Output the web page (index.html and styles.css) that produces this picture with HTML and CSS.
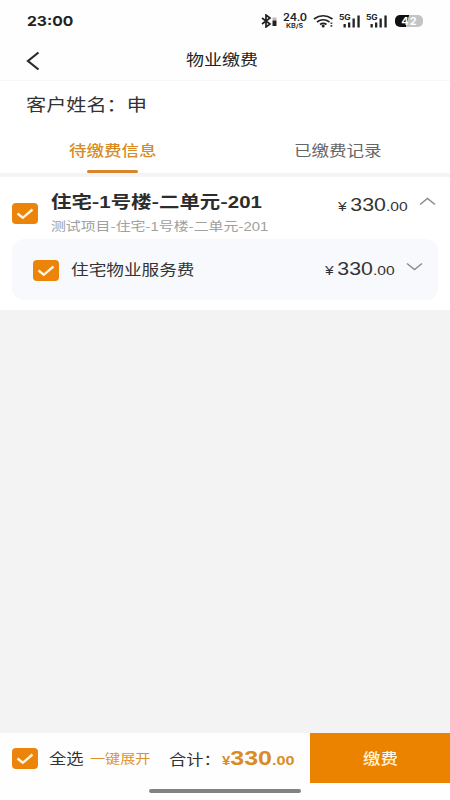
FILE: index.html
```html
<!DOCTYPE html>
<html lang="zh-CN">
<head>
<meta charset="utf-8">
<meta name="viewport" content="width=device-width, initial-scale=1">
<title>物业缴费</title>
<link rel="stylesheet" href="styles.css">
</head>
<body>
<svg width="0" height="0" class="defs" aria-hidden="true">
  <symbol id="check" viewBox="0 0 26 21">
    <rect width="26" height="21" rx="4" fill="#ec8409"/>
    <path d="M5.500 10.500l5.300 4.300 9.700-8.300" fill="none" stroke="#fff5e2" stroke-width="2.400"/>
  </symbol>
  <symbol id="signal" viewBox="0 0 22 16">
    <path d="M4.500 14.500v-3.500h2.300v3.500zM9 14.500V9.500h2.300v5zM13.500 14.500V5.500h2.300v9zM18.400 14.500V2.500h2.300v12z" fill="#222"/>
  </symbol>
</svg>
<div class="screen">
  <header class="status">
    <span class="clock"><span class="wide">23:00</span></span>
    <svg class="bt" viewBox="0 0 17 14"><path d="M1 4l8 6-4 3V1l4 3-8 6" fill="none" stroke="#222" stroke-width="1.700"/><path d="M11.500 3.500h4v3h-4z" fill="#bbb"/><path d="M11.500 6.500h4v5.500h-4z" fill="#222"/></svg>
    <span class="speed"><b class="wide">24.0</b><small class="wide">KB/S</small></span>
    <svg class="wifi" viewBox="0 0 21 14"><g fill="none" stroke="#222" stroke-width="1.700"><path d="M1 5q9-6.500 18.500 0M4 8q6.200-4.500 12.500 0M7 10.500q3.200-2.300 6.500 0"/></g><circle cx="10.200" cy="12" r="1.500" fill="#222"/><path d="M17.500 8.500h1.800v1.500h-1.800zM17.500 11h1.800v1.800h-1.800z" fill="#444"/></svg>
    <span class="net"><i class="wide">5G</i><svg viewBox="0 0 22 16"><use href="#signal"/></svg></span>
    <span class="net second"><i class="wide">5G</i><svg viewBox="0 0 22 16"><use href="#signal"/></svg></span>
    <span class="battery"><b>4</b><b>2</b></span>
  </header>

  <nav class="nav">
    <svg class="back" viewBox="0 0 14 20"><path d="M12.500 1.500L2 10l10.500 8.500" fill="none" stroke="#2b2b2b" stroke-width="2.200"/></svg>
    <h1 class="wide">物业缴费</h1>
  </nav>

  <div class="customer"><span class="wide">客户姓名：申</span></div>

  <div class="tabs">
    <div class="tab active"><span class="wide">待缴费信息</span></div>
    <div class="tab"><span class="wide">已缴费记录</span></div>
  </div>

  <main class="bill">
    <div class="house">
      <svg class="box"><use href="#check"/></svg>
      <div class="names">
        <h2 class="wide">住宅-<em>1</em>号楼-二单元-<em>201</em></h2>
        <p class="wide">测试项目-住宅-<em>1</em>号楼-二单元-<em>201</em></p>
      </div>
      <div class="price"><span class="wide"><small class="yen">¥</small>330<small>.00</small></span></div>
      <svg class="arrow" viewBox="0 0 17 9"><path d="M1 7.500l7.500-6 7.500 6" fill="none" stroke="#8c8c8c" stroke-width="1.500"/></svg>
    </div>
    <div class="fee">
      <svg class="box"><use href="#check"/></svg>
      <div class="fee-name"><span class="wide">住宅物业服务费</span></div>
      <div class="price"><span class="wide"><small class="yen">¥</small>330<small>.00</small></span></div>
      <svg class="arrow" viewBox="0 0 17 9"><path d="M1 1.500l7.500 6 7.500-6" fill="none" stroke="#8c8c92" stroke-width="1.500"/></svg>
    </div>
  </main>

  <footer class="footer">
    <div class="summary">
      <svg class="box"><use href="#check"/></svg>
      <div class="all"><span class="wide">全选</span></div>
      <div class="expand"><span class="wide">一键展开</span></div>
      <div class="sum-label"><span class="wide">合计：</span></div>
      <div class="total"><span class="wide"><small class="yen">¥</small>330<small>.00</small></span></div>
    </div>
    <button class="pay"><span class="wide">缴费</span></button>
    <div class="home"></div>
  </footer>
</div>
</body>
</html>
```

FILE: styles.css
```css
* { box-sizing: border-box; margin: 0; padding: 0; }
body {
  font-family: "Noto Sans CJK SC", sans-serif;
  color: #333;
  background: #f3f3f3;
}
.defs { display: block; height: 0; }
.screen {
  width: 450px;
  height: 800px;
  display: flex;
  flex-direction: column;
  overflow: hidden;
}
/* The interface face is wider than its height */
.wide {
  display: inline-block;
  white-space: nowrap;
  transform: scaleX(1.2);
  transform-origin: 0 50%;
}
em, i { font-style: normal; }
em, .price, .total { font-family: "Liberation Sans", sans-serif; }

.status {
  height: 42px;
  padding-left: 26px;
  background: #fefefe;
  display: flex;
  align-items: center;
  font-family: Inter, sans-serif;
  color: #222;
}
.clock { width: 235px; padding-left: 1px; font-size: 13.500px; font-weight: 700; }
.clock .wide { transform: scaleX(1.16); }
.bt { width: 17px; height: 14px; margin-right: 5px; }
.speed { width: 30px; display: flex; flex-direction: column; }
.speed b { width: 21px; font-size: 10px; line-height: 9px; font-weight: 600; transform: scaleX(1.1); }
.speed small { width: 16px; margin: 1px 0 0 3px; font-size: 6px; line-height: 6px; font-weight: 600; }
.wifi { width: 21px; height: 14px; }
.net { width: 22px; height: 16px; margin-left: 5px; position: relative; }
.net svg { width: 22px; height: 16px; display: block; }
.net i { position: absolute; left: 0; top: 1px; font-size: 7px; line-height: 7px; font-weight: 700; }
.battery {
  width: 28px;
  height: 12px;
  margin-left: 7px;
  border-radius: 5px;
  background: linear-gradient(105deg, #111 44%, #c4c4c4 46%);
  color: #fff;
  display: flex;
  justify-content: center;
  gap: 1px;
  font-size: 11px;
  line-height: 12px;
}

.nav {
  height: 39px;
  padding-left: 26px;
  background: #fefefe;
  border-bottom: 1px solid #f8f8f8;
  display: flex;
  align-items: center;
}
.back { width: 14px; height: 20px; margin-right: 146px; }
.nav h1 { margin-top: -5px; font-size: 15px; font-weight: 400; color: #222; }

.customer { height: 48px; padding-left: 26px; background: #fff; font-size: 16.800px; line-height: 47px; }

.tabs {
  height: 48px;
  background: #fff;
  border-bottom: 4px solid #f4f4f4;
  display: grid;
  grid-template-columns: 1fr 1fr;
}
.tab { padding-left: 69px; font-size: 14.600px; line-height: 42px; color: #666; position: relative; }
.tab.active { color: #d88b25; font-weight: 500; }
.tab.active::after {
  content: "";
  position: absolute;
  left: 87px;
  bottom: 0;
  width: 51px;
  height: 3px;
  border-radius: 2px;
  background: #d8852b;
}

.bill { height: 133px; background: #fff; }
.box { width: 26px; height: 21px; flex: none; display: block; }
.house { height: 62px; padding-left: 12px; display: flex; }
.house .box { margin-top: 26px; }
.names { width: 300px; flex: none; padding: 12px 0 0 13px; }
.names h2 { display: block; width: 176px; font-size: 17px; line-height: 24px; font-weight: 700; color: #2c2c2c; }
.names p { display: block; width: 182px; font-size: 12.400px; line-height: 22px; color: #a0a0a0; }
.price { width: 81px; flex: none; font-size: 17.800px; line-height: 20px; }
.price small { font-size: 13px; }
.price .yen { margin-right: 3px; }
.house .price { padding-top: 18px; }
.arrow { width: 17px; height: 9px; flex: none; }
.house .arrow { margin-top: 20px; }
.fee {
  height: 61px;
  margin: 0 12px;
  padding-left: 20px;
  background: #f8f9fd;
  border-radius: 12px;
  display: flex;
  align-items: center;
}
.fee .box { margin: 1px 0 0 1px; }
.fee-name { width: 266px; padding: 0 0 3px 12px; font-size: 14.700px; }
.fee .arrow { margin-bottom: 6px; }

.footer {
  height: 67px;
  margin-top: auto;
  background: #fefefe;
  display: grid;
  grid-template: 50px 17px / 310px 140px;
}
.summary { padding-left: 12px; display: flex; align-items: center; }
.all { width: 52px; padding: 0 0 2px 11px; font-size: 14.400px; }
.expand { width: 79px; padding-bottom: 2px; font-size: 12.600px; color: #dc932f; }
.sum-label { width: 53px; font-size: 14.400px; padding-top: 1px; }
.total { padding-top: 2px; font-size: 20.800px; line-height: 22px; font-weight: 700; color: #d98c26; }
.total small { font-size: 13.500px; }
.total .yen { font-size: 12.500px; }
.pay {
  border: 0;
  padding: 0 0 2px 53px;
  text-align: left;
  background: #ec8300;
  color: #fff4df;
  font: 500 14.500px "Noto Sans CJK SC", sans-serif;
}
.home { grid-column: 1 / -1; width: 152px; height: 4px; margin: 6px 0 0 149px; border-radius: 2px; background: #828282; }
```
